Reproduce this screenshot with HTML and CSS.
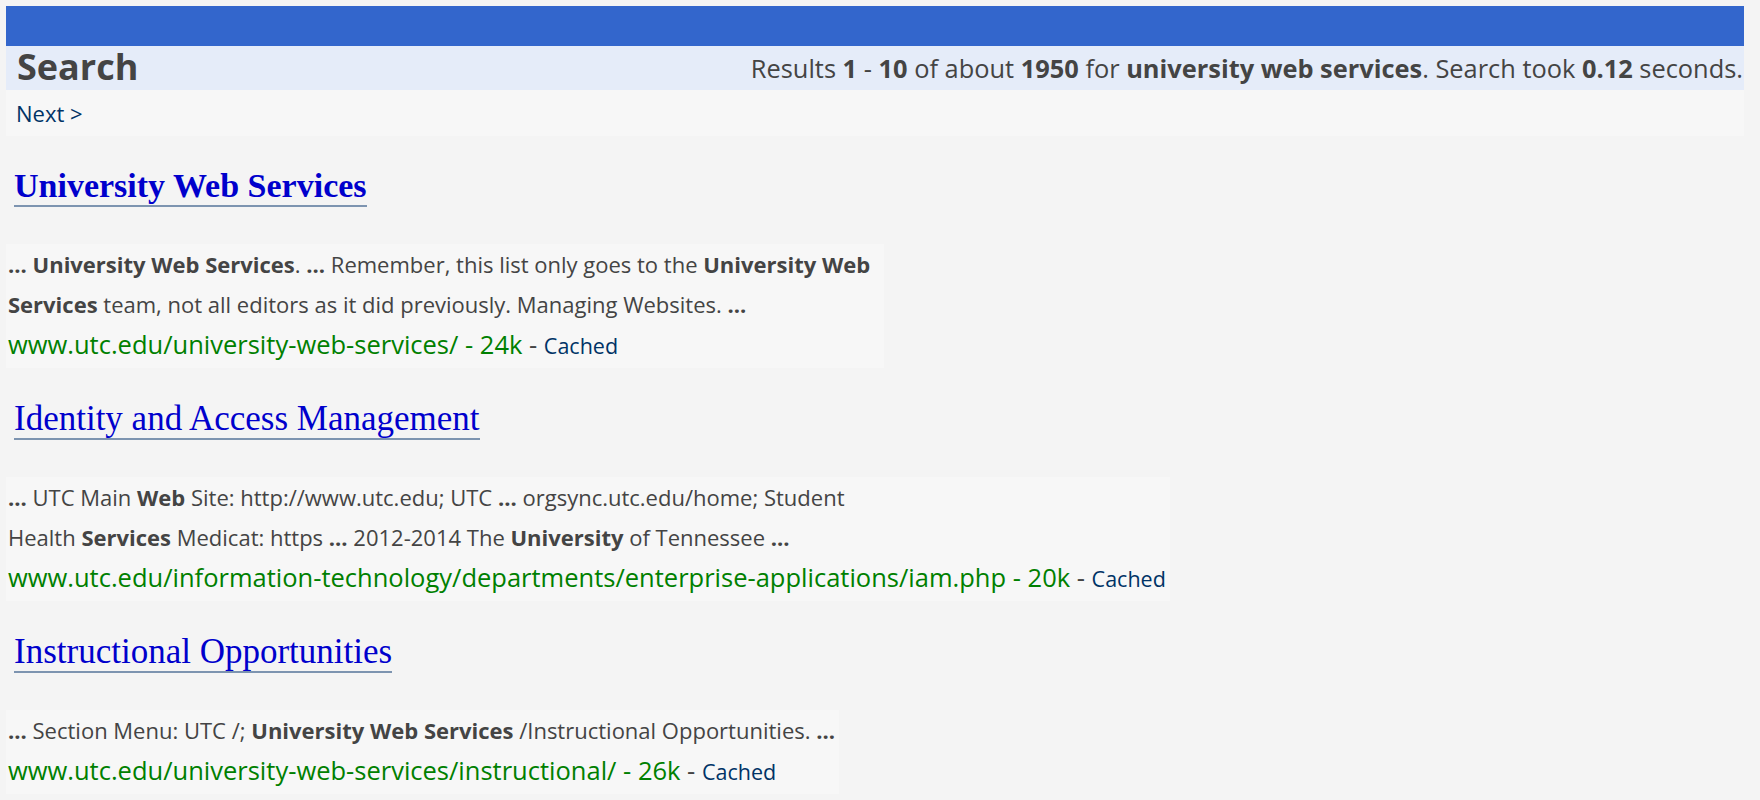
FILE: index.html
```html
<!DOCTYPE html>
<html lang="en">
<head>
<meta charset="utf-8">
<title>Search</title>
<link rel="stylesheet" href="styles.css">
</head>
<body>
<div class="page">
  <div class="topbar"></div>
  <div class="header">
    <h1 class="header-title">Search</h1>
    <div class="header-stats">Results <b>1</b> - <b>10</b> of about <b>1950</b> for <b>university web services</b>. Search took <b>0.12</b> seconds.</div>
  </div>
  <div class="nav"><a class="nav-link" href="#">Next &gt;</a></div>

  <div class="result">
    <h2 class="result-title result-title--bold"><a href="#">University Web Services</a></h2>
    <div class="result-body">
      <div class="snippet"><b>...</b> <b>University Web Services</b>. <b>...</b> Remember, this list only goes to the <b>University Web Services</b> team, not all editors as it did previously. Managing Websites. <b>...</b></div>
      <div class="meta"><span class="url">www.utc.edu/university-web-services/ - 24k</span> - <a class="cached" href="#">Cached</a></div>
    </div>
  </div>

  <div class="result">
    <h2 class="result-title"><a href="#">Identity and Access Management</a></h2>
    <div class="result-body">
      <div class="snippet"><b>...</b> UTC Main <b>Web</b> Site: http://www.utc.edu; UTC <b>...</b> orgsync.utc.edu/home; Student Health <b>Services</b> Medicat: https <b>...</b> 2012-2014 The <b>University</b> of Tennessee <b>...</b></div>
      <div class="meta"><span class="url">www.utc.edu/information-technology/departments/enterprise-applications/iam.php - 20k</span> - <a class="cached" href="#">Cached</a></div>
    </div>
  </div>

  <div class="result">
    <h2 class="result-title"><a href="#">Instructional Opportunities</a></h2>
    <div class="result-body">
      <div class="snippet"><b>...</b> Section Menu: UTC /; <b>University Web Services</b> /Instructional Opportunities. <b>...</b></div>
      <div class="meta"><span class="url">www.utc.edu/university-web-services/instructional/ - 26k</span> - <a class="cached" href="#">Cached</a></div>
    </div>
  </div>
</div>
</body>
</html>
```

FILE: styles.css
```css
html, body {
  margin: 0;
  padding: 0;
  background: #f4f4f4;
}

body {
  padding: 6px 16px 6px 6px;
  font-family: "Open Sans", "Liberation Sans", sans-serif;
  color: #444;
}

.page {
  width: 1738px;
}

.topbar {
  height: 40px;
  background: #3366cc;
}

.header {
  display: flex;
  align-items: center;
  justify-content: space-between;
  height: 44px;
  background: #e5ecf9;
  padding: 0 1px 0 11px;
}

.header-title {
  margin: 0;
  font-size: 36px;
  line-height: 44px;
  font-weight: 700;
  color: #444;
  position: relative;
  top: -1px;
}

.header-stats {
  font-size: 25.4px;
  line-height: 44px;
  color: #444;
}

.header-stats b {
  font-weight: 700;
}

.nav {
  height: 46px;
  line-height: 46px;
  background: #f7f7f7;
  padding-left: 10px;
}

.nav-link {
  font-size: 22px;
  color: #003366;
  text-decoration: none;
}

.result {
  padding-top: 30px;
}

.result + .result {
  padding-top: 31px;
}

.result-title {
  margin: 0 0 37px 8px;
  display: inline-block;
  font-family: "Liberation Serif", "Times New Roman", serif;
  font-size: 35px;
  font-weight: 400;
  line-height: 39px;
  border-bottom: 2px solid #7d94b0;
}

.result-title--bold {
  font-weight: 700;
  font-size: 34px;
}

.result-title a {
  color: #0000cc;
  text-decoration: none;
}

.result-body {
  width: fit-content;
  background: #f7f7f7;
  padding: 0 4px 2px 2px;
  font-size: 22px;
  line-height: 40px;
  color: #444;
}

.snippet {
  max-width: 872px;
}

.snippet b {
  font-weight: 700;
}

.meta {
  white-space: nowrap;
  font-size: 25.5px;
}

.url {
  color: #008000;
}

.cached {
  font-size: 21.5px;
  color: #003366;
  text-decoration: none;
}
```
